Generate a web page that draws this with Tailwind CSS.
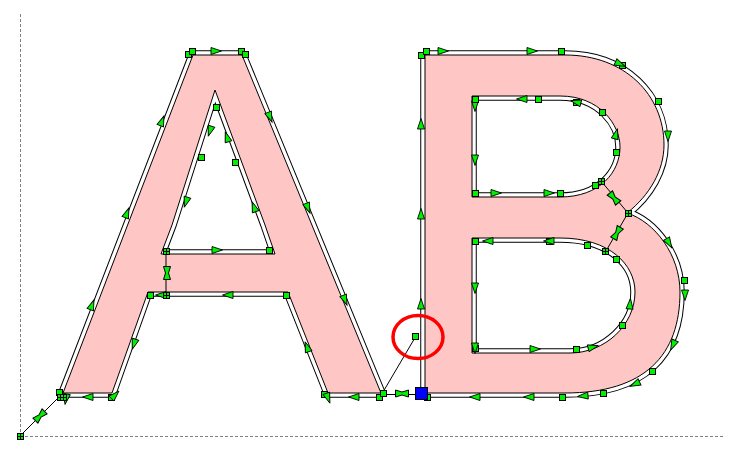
<!DOCTYPE html>
<html lang="en">
<head>
    <meta charset="UTF-8">
    <title>AB outline</title>
    <script src="https://cdn.jsdelivr.net/npm/@tailwindcss/browser@4"></script>
</head>
<body class="bg-white">
    <svg class="block w-[741px] h-[449px]" viewBox="0 0 741 449" xmlns="http://www.w3.org/2000/svg">
        <defs>
            <path id="glyphs" d="M193 55H242L381 393H328L288 292H148L112 393H63ZM215 90L172 225L161 254H275L265 225ZM425 55H565C625 55 664 95 664 145C664 170 650 195 627 213C655 222 680 255 680 292C680 355 645 393 565 393H425ZM472 96V197H560C600 197 620 172 620 147C620 125 600 96 560 96ZM472 238V353H570C605 353 635 325 635 292C635 265 610 238 560 238Z"/>
            <polygon id="arrow" points="-5,-3.5 5.5,0 -5,3.5" fill="#00f000" stroke="#000" stroke-width="0.9"/>
            <polygon id="bow" points="-6.5,-3.5 0,-1.5 6.5,-3.5 6.5,3.5 0,1.5 -6.5,3.5" fill="#00f000" stroke="#000" stroke-width="1"/>
            <rect id="node" x="-2.5" y="-2.5" width="6" height="6" fill="#00f000" stroke="#000" stroke-width="1"/>
            <g id="grid">
                <rect x="-2.5" y="-2.5" width="6" height="6" fill="#00f000" stroke="#000" stroke-width="1"/>
                <path d="M-3 0.5H4M0.5 -3V4" stroke="#000" stroke-width="1"/>
            </g>
        </defs>

        <!-- dashed axes -->
        <path d="M20.5 14V436M20 436.5H725" fill="none" stroke="#808080" stroke-width="1" stroke-dasharray="3 2"/>

        <!-- offset control curves: black then white stroke, glyph fill on top -->
        <g fill="none" stroke-linejoin="bevel">
            <use href="#glyphs" stroke="#000" stroke-width="9.5"/>
            <use href="#glyphs" stroke="#fff" stroke-width="7.5"/>
        </g>

        <!-- glyph fill -->
        <use href="#glyphs" fill="#ffc6c6" fill-rule="evenodd" stroke="#000" stroke-width="1"/>

        <!-- handles -->
        <path d="M20 436L60 396M166 251V295M383 392L416 336M383 394.5H416M601 181L628 213L606 251" fill="none" stroke="#000" stroke-width="1"/>

        <!-- direction arrows, A -->
        <use href="#arrow" transform="translate(216 51)"/>
        <use href="#arrow" transform="translate(162 121) rotate(-69)"/>
        <use href="#arrow" transform="translate(127 213) rotate(-69)"/>
        <use href="#arrow" transform="translate(92 305) rotate(-69)"/>
        <use href="#arrow" transform="translate(270 117) rotate(68)"/>
        <use href="#arrow" transform="translate(308 208) rotate(68)"/>
        <use href="#arrow" transform="translate(345 300) rotate(68)"/>
        <use href="#arrow" transform="translate(210 131) rotate(108)"/>
        <use href="#arrow" transform="translate(186 202) rotate(108)"/>
        <use href="#arrow" transform="translate(227 137) rotate(-108)"/>
        <use href="#arrow" transform="translate(254 207) rotate(-110)"/>
        <use href="#arrow" transform="translate(217 250)"/>
        <use href="#bow" transform="translate(167 273) rotate(90)"/>
        <use href="#arrow" transform="translate(161 295) rotate(180)"/>
        <use href="#arrow" transform="translate(228 295) rotate(180)"/>
        <use href="#arrow" transform="translate(134 344) rotate(108)"/>
        <use href="#arrow" transform="translate(307 347) rotate(-110)"/>
        <use href="#arrow" transform="translate(88 397) rotate(180)"/>
        <use href="#arrow" transform="translate(354 397) rotate(180)"/>
        <use href="#arrow" transform="translate(66 399) rotate(100)"/>
        <use href="#bow" transform="translate(40 416) rotate(-45)"/>

        <!-- direction arrows, B -->
        <use href="#bow" transform="translate(402 393.5)"/>
        <use href="#arrow" transform="translate(421 304) rotate(-90)"/>
        <use href="#arrow" transform="translate(421 214) rotate(-90)"/>
        <use href="#arrow" transform="translate(421 124) rotate(-90)"/>
        <use href="#arrow" transform="translate(443 51)"/>
        <use href="#arrow" transform="translate(532 51)"/>
        <use href="#arrow" transform="translate(668 136) rotate(90)"/>
        <use href="#arrow" transform="translate(475 106) rotate(90)"/>
        <use href="#arrow" transform="translate(475 160) rotate(90)"/>
        <use href="#arrow" transform="translate(496 193)"/>
        <use href="#arrow" transform="translate(549 193)"/>
        <use href="#arrow" transform="translate(616 134) rotate(-75)"/>
        <use href="#arrow" transform="translate(522 99) rotate(180)"/>
        <use href="#bow" transform="translate(614 198) rotate(50)"/>
        <use href="#bow" transform="translate(617 233) rotate(-60)"/>
        <use href="#arrow" transform="translate(488 241) rotate(180)"/>
        <use href="#arrow" transform="translate(475 288) rotate(90)"/>
        <use href="#arrow" transform="translate(535 349)"/>
        <use href="#arrow" transform="translate(593 347) rotate(-15)"/>
        <use href="#arrow" transform="translate(630 304) rotate(-85)"/>
        <use href="#arrow" transform="translate(635 384) rotate(155)"/>
        <use href="#arrow" transform="translate(583 396) rotate(175)"/>
        <use href="#arrow" transform="translate(529 397) rotate(180)"/>
        <use href="#arrow" transform="translate(475 397) rotate(180)"/>
        <use href="#arrow" transform="translate(673 345) rotate(115)"/>
        <use href="#arrow" transform="translate(685 295) rotate(90)"/>
        <use href="#arrow" transform="translate(669 243) rotate(60)"/>

        <!-- nodes -->
        <g shape-rendering="crispEdges">
            <use href="#node" x="188" y="54"/>
            <use href="#node" x="192" y="51"/>
            <use href="#node" x="241" y="51"/>
            <use href="#node" x="245" y="54"/>
            <use href="#node" x="216" y="107"/>
            <use href="#node" x="201" y="157"/>
            <use href="#node" x="235" y="162"/>
            <use href="#grid" x="166" y="251"/>
            <use href="#node" x="269" y="250"/>
            <use href="#node" x="150" y="295"/>
            <use href="#grid" x="166" y="295"/>
            <use href="#node" x="286" y="295"/>
            <use href="#node" x="59" y="392"/>
            <use href="#grid" x="60" y="397"/>
            <use href="#grid" x="63" y="397"/>
            <use href="#node" x="111" y="397"/>
            <use href="#node" x="324" y="394"/>
            <use href="#grid" x="20" y="436"/>
            <use href="#node" x="379" y="397"/>
            <use href="#node" x="383" y="393"/>
            <use href="#node" x="415" y="336"/>
            <use href="#node" x="427" y="397"/>
            <use href="#node" x="421" y="55"/>
            <use href="#node" x="426" y="51"/>
            <use href="#node" x="561" y="51"/>
            <use href="#node" x="622" y="65"/>
            <use href="#node" x="658" y="101"/>
            <use href="#node" x="475" y="99"/>
            <use href="#node" x="538" y="99"/>
            <use href="#node" x="576" y="102"/>
            <use href="#node" x="602" y="112"/>
            <use href="#node" x="616" y="152"/>
            <use href="#grid" x="601" y="181"/>
            <use href="#node" x="595" y="185"/>
            <use href="#node" x="560" y="193"/>
            <use href="#node" x="475" y="193"/>
            <use href="#grid" x="628" y="213"/>
            <use href="#node" x="475" y="241"/>
            <use href="#node" x="549" y="241"/>
            <use href="#node" x="587" y="245"/>
            <use href="#grid" x="605" y="251"/>
            <use href="#node" x="616" y="259"/>
            <use href="#node" x="684" y="280"/>
            <use href="#node" x="622" y="325"/>
            <use href="#node" x="475" y="348"/>
            <use href="#node" x="576" y="349"/>
            <use href="#node" x="652" y="371"/>
            <use href="#node" x="603" y="393"/>
            <use href="#node" x="562" y="397"/>
            <rect x="415.5" y="387.5" width="12" height="12" fill="#0000ff" stroke="#000" stroke-width="1"/>
        </g>

        <!-- arrows lying over their nodes -->
        <use href="#arrow" transform="translate(115 395) rotate(-45)"/>
        <use href="#arrow" transform="translate(328 398) rotate(70)"/>
        <use href="#arrow" transform="translate(620 64) rotate(25)"/>
        <use href="#arrow" transform="translate(576 102) rotate(195)"/>
        <use href="#arrow" transform="translate(549 241) rotate(180)"/>
        <use href="#arrow" transform="translate(475 348) rotate(90)"/>

        <!-- red hand drawn circle -->
        <ellipse cx="418" cy="337" rx="25" ry="21.5" fill="none" stroke="#ff0000" stroke-width="3.5"/>
    </svg>
</body>
</html>
